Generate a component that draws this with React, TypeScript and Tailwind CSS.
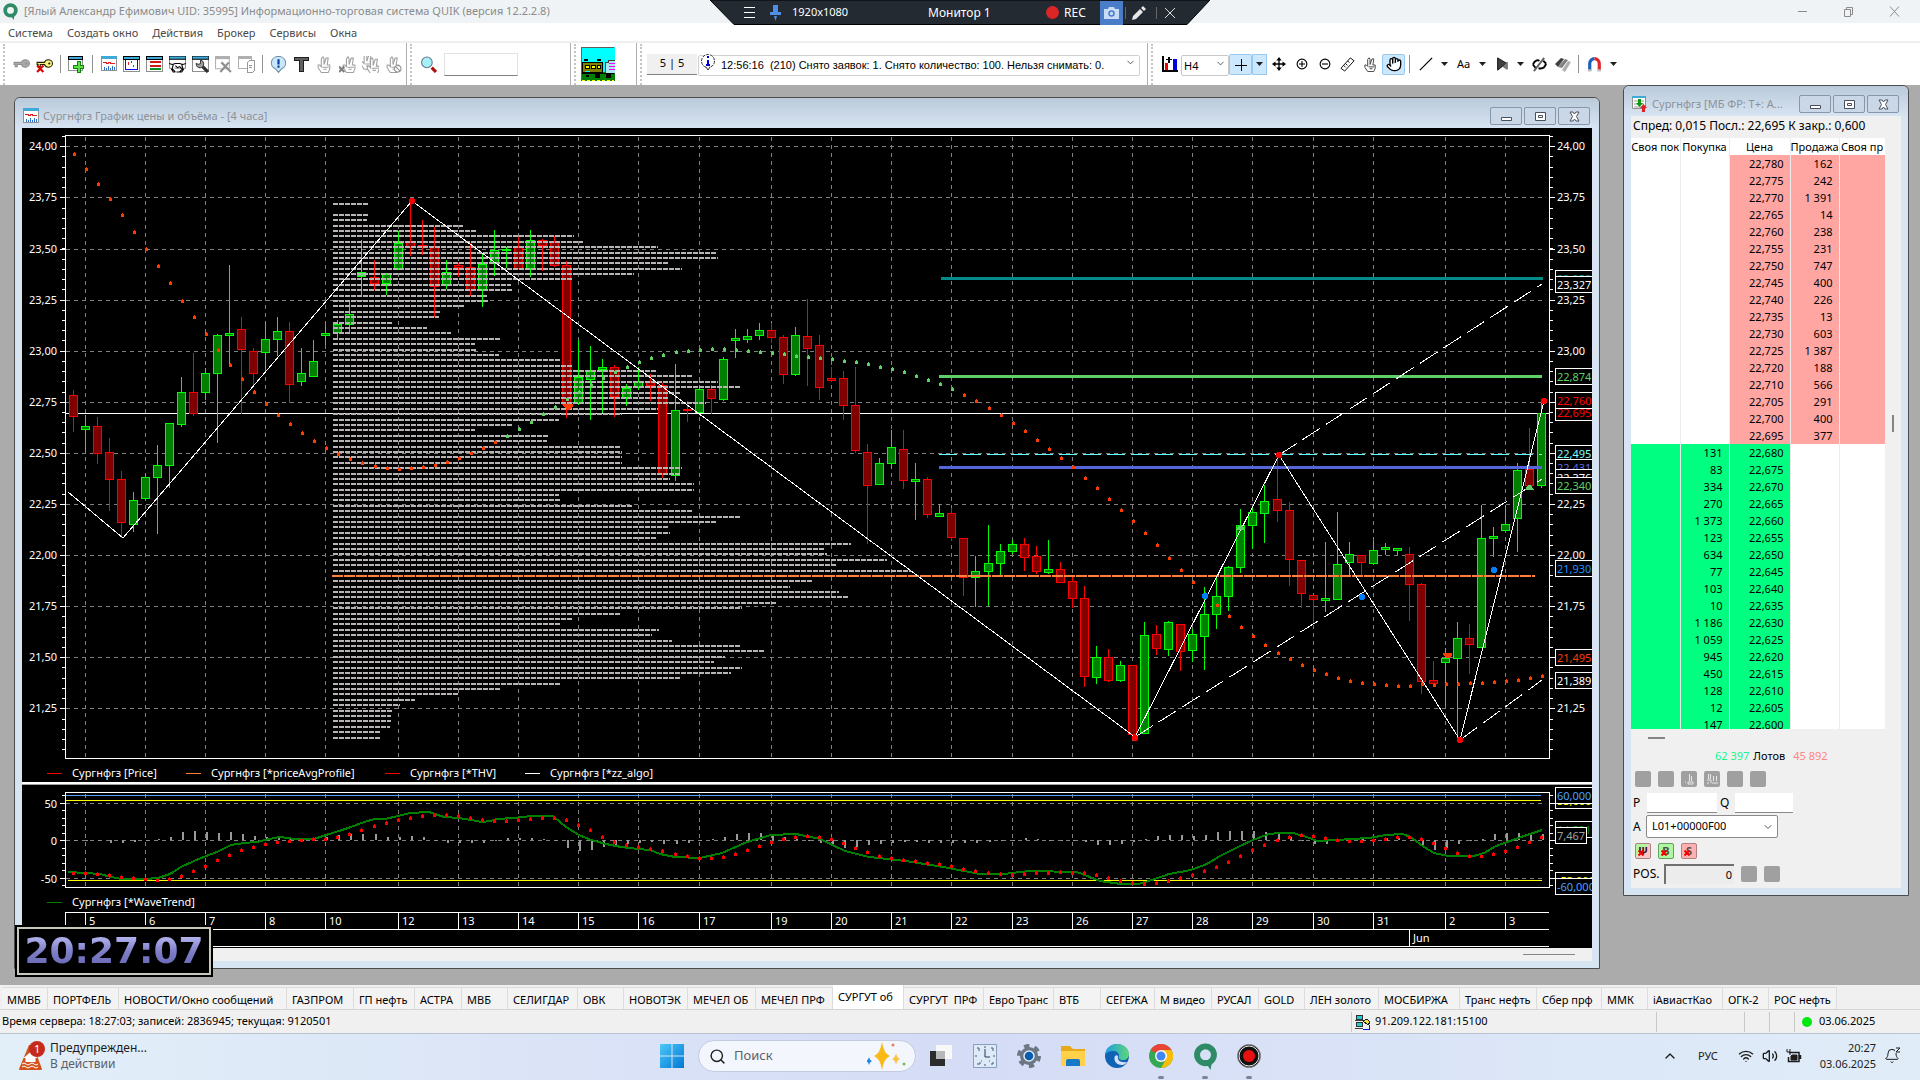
import type { ReactNode } from "react";
import { Bell, ChevronDown, ChevronUp, Hand, Search, Volume2, Wifi } from "lucide-react";

type Candle = [string, number, number, number, number];

interface IQuote {
  price: string;
  qty: string;
}

interface ITab {
  title: string;
  width: string;
}

/* ---------- chart data ---------- */

// color, high, body top, body bottom, low
const candles: Candle[] = [
  ["r", 390, 395, 417, 432], ["g", 415, 426, 430, 452], ["r", 417, 426, 454, 464],
  ["r", 438, 452, 480, 511], ["r", 471, 479, 523, 538], ["g", 492, 500, 525, 532],
  ["g", 474, 477, 499, 500], ["g", 445, 465, 478, 534], ["g", 423, 423, 466, 488],
  ["g", 377, 392, 425, 427], ["r", 353, 392, 414, 416], ["g", 368, 373, 393, 400],
  ["g", 334, 335, 374, 443], ["g", 265, 333, 336, 364], ["r", 317, 329, 350, 414],
  ["r", 348, 351, 374, 385], ["g", 322, 339, 353, 369], ["g", 317, 331, 340, 356],
  ["r", 322, 331, 385, 403], ["g", 348, 373, 382, 386], ["g", 340, 361, 377, 377],
  ["g", 324, 333, 336, 345], ["g", 320, 324, 333, 338], ["g", 302, 314, 325, 334],
  ["l", 240, 272, 277, 295], ["r", 260, 277, 284, 290], ["g", 273, 274, 284, 295],
  ["g", 231, 243, 269, 270], ["r", 201, 242, 248, 256], ["r", 220, 245, 247, 255],
  ["r", 227, 246, 287, 317], ["g", 260, 272, 285, 289], ["r", 263, 265, 268, 277],
  ["r", 243, 267, 291, 296], ["g", 253, 264, 290, 307], ["g", 230, 250, 263, 276],
  ["g", 247, 249, 251, 268], ["r", 237, 247, 269, 269], ["g", 230, 240, 269, 277],
  ["r", 239, 240, 246, 271], ["r", 236, 242, 266, 267], ["r", 261, 265, 405, 418],
  ["g", 340, 377, 404, 405], ["g", 346, 371, 380, 420], ["g", 359, 367, 370, 413],
  ["r", 365, 367, 397, 417], ["g", 384, 388, 398, 406], ["g", 367, 381, 388, 390],
  ["r", 374, 382, 386, 401], ["r", 383, 385, 474, 478], ["g", 364, 410, 476, 481],
  ["r", 401, 409, 410, 422], ["g", 388, 389, 413, 413], ["r", 385, 389, 399, 414],
  ["g", 357, 359, 400, 401], ["g", 329, 338, 341, 358], ["g", 329, 336, 340, 343],
  ["g", 323, 330, 336, 340], ["r", 323, 330, 338, 343], ["r", 335, 337, 375, 384],
  ["g", 327, 335, 375, 376], ["r", 299, 336, 349, 386], ["r", 335, 345, 388, 400],
  ["r", 367, 378, 381, 382], ["r", 371, 378, 406, 420], ["r", 367, 405, 451, 453],
  ["r", 444, 452, 486, 544], ["g", 458, 463, 485, 485], ["g", 430, 447, 464, 469],
  ["r", 430, 449, 481, 489], ["g", 463, 479, 482, 520], ["r", 477, 479, 515, 518],
  ["g", 504, 513, 517, 517], ["r", 508, 513, 538, 541], ["r", 538, 538, 578, 596],
  ["g", 556, 571, 578, 607], ["g", 525, 563, 572, 606], ["g", 544, 551, 564, 576],
  ["g", 540, 544, 552, 554], ["r", 538, 544, 558, 571], ["r", 546, 556, 572, 574],
  ["g", 540, 569, 573, 574], ["r", 562, 569, 583, 583], ["r", 577, 581, 599, 608],
  ["r", 586, 598, 677, 687], ["g", 646, 657, 678, 684], ["r", 649, 657, 681, 682],
  ["g", 661, 665, 681, 682], ["r", 665, 665, 735, 737], ["g", 622, 635, 734, 734],
  ["r", 625, 634, 649, 655], ["g", 621, 622, 650, 656], ["r", 624, 624, 652, 671],
  ["g", 629, 634, 651, 662], ["g", 587, 614, 637, 670], ["g", 578, 596, 615, 629],
  ["g", 566, 567, 597, 611], ["g", 509, 525, 568, 573], ["g", 508, 512, 526, 549],
  ["g", 485, 501, 514, 543], ["r", 455, 499, 511, 522], ["r", 502, 510, 560, 586],
  ["r", 560, 560, 594, 608], ["r", 595, 595, 600, 624], ["g", 542, 598, 601, 612],
  ["g", 512, 564, 600, 600], ["g", 542, 554, 563, 576], ["r", 555, 555, 563, 576],
  ["g", 541, 550, 564, 564], ["g", 543, 547, 550, 555], ["g", 548, 548, 551, 555],
  ["r", 547, 554, 585, 621], ["r", 583, 584, 682, 694], ["r", 661, 680, 684, 684],
  ["g", 648, 658, 663, 706], ["g", 622, 638, 659, 740], ["r", 624, 638, 645, 674],
  ["g", 505, 538, 648, 648], ["g", 527, 536, 539, 557], ["g", 505, 524, 531, 531],
  ["g", 463, 470, 519, 552], ["r", 428, 469, 486, 486], ["g", 401, 413, 486, 488],
];

// right edge of every volume row, 0 means an empty row
const profile: number[] = [
  369, 0, 369, 367, 463, 477, 574, 583, 658, 716, 718, 668, 682, 634, 572, 511, 513, 487, 489, 465,
  441, 439, 393, 427, 451, 501, 475, 477, 499, 561, 572, 656, 692, 718, 740, 680, 668, 706, 658, 622,
  559, 513, 475, 549, 547, 620, 622, 622, 622, 682, 680, 670, 694, 694, 559, 561, 632, 692, 740, 716,
  668, 670, 656, 851, 825, 827, 887, 837, 911, 0, 812, 790, 839, 849, 776, 742, 620, 572, 560, 659,
  652, 672, 740, 765, 725, 714, 742, 731, 680, 560, 500, 458, 415, 400, 393, 391, 391, 390, 380, 380,
];

const thv: number[] = [
  153, 168, 183, 198, 214, 231, 248, 265, 282, 300, 316, 333, 349, 364, 378, 391, 403, 414, 423, 432,
  440, 447, 453, 458, 462, 465, 467, 468, 467, 466, 464, 461, 457, 452, 447, 441, 435, 428, 421, 413,
  406, 398, 391, 384, 377, 371, 366, 361, 357, 354, 351, 350, 349, 348, 348, 349, 350, 351, 352, 353,
  355, 356, 357, 358, 360, 361, 363, 366, 368, 371, 375, 379, 383, 388, 394, 400, 407, 414, 422, 430,
  439, 448, 457, 466, 477, 487, 498, 509, 520, 532, 544, 557, 569, 581, 593, 604, 615, 626, 635, 644,
  652, 658, 664, 669, 673, 677, 680, 682, 683, 684, 685, 685, 683, 684, 683, 683, 682, 682, 681, 680,
  679, 677, 675,
];

const wave: [number, number][] = [
  [68, 872], [86, 873], [100, 874], [111, 877], [122, 879], [145, 879], [158, 878], [170, 874],
  [181, 867], [194, 861], [206, 856], [217, 852], [231, 845], [244, 843], [257, 842], [269, 839],
  [280, 837], [295, 839], [314, 839], [326, 835], [339, 831], [351, 827], [364, 822], [375, 819],
  [385, 819], [398, 816], [410, 813], [429, 812], [444, 817], [459, 818], [471, 820], [482, 822],
  [490, 821], [497, 819], [513, 818], [532, 816], [553, 816], [566, 827], [579, 835], [591, 840],
  [606, 844], [621, 847], [638, 849], [650, 850], [660, 854], [675, 857], [700, 858], [722, 853],
  [747, 842], [771, 835], [796, 834], [820, 839], [845, 851], [869, 857], [906, 861], [943, 867],
  [980, 874], [1004, 874], [1029, 871], [1077, 872], [1100, 881], [1121, 884], [1138, 884],
  [1152, 880], [1169, 874], [1191, 870], [1207, 864], [1220, 856], [1238, 847], [1253, 840],
  [1269, 834], [1279, 833], [1293, 833], [1307, 837], [1317, 841], [1338, 840], [1351, 839],
  [1369, 838], [1386, 835], [1403, 834], [1412, 838], [1424, 847], [1434, 853], [1448, 856],
  [1474, 856], [1484, 853], [1496, 846], [1510, 841], [1524, 836], [1542, 830],
];

const days: [number, string][] = [
  [1, "5"], [6, "6"], [11, "7"], [16, "8"], [21, "10"], [27, "12"], [32, "13"], [37, "14"],
  [42, "15"], [47, "16"], [52, "17"], [58, "19"], [63, "20"], [68, "21"], [73, "22"], [78, "23"],
  [83, "26"], [88, "27"], [93, "28"], [98, "29"], [103, "30"], [108, "31"], [114, "2"], [119, "3"],
];

const prices = ["24,00", "23,75", "23,50", "23,25", "23,00", "22,75", "22,50", "22,25", "22,00", "21,75", "21,50", "21,25"];

// prices that a tag covers on the right axis
const covered = ["22,75", "22,50", "21,50"];

const priceTags: [string, number, string][] = [
  ["23,353", 279, "#008b8b"],
  ["23,327", 285, "#ffffff"],
  ["22,874", 377, "#5fd068"],
  ["22,695", 413, "#ff0000"],
  ["22,760", 401, "#ff0000"],
  ["22,495", 454, "#7fffff"],
  ["22,431", 468, "#5b6ee0"],
  ["22,376", 478, "#ffffff"],
  ["22,340", 486, "#5fd068"],
  ["21,930", 569, "#1e90ff"],
  ["21,495", 658, "#ff3c00"],
  ["21,389", 681, "#ffffff"],
];

const legend: [number, string, string][] = [
  [47, "Сургнфгз [Price]", "#ff0000"],
  [186, "Сургнфгз [*priceAvgProfile]", "#ff7f3f"],
  [385, "Сургнфгз [*THV]", "#ff0000"],
  [525, "Сургнфгз [*zz_algo]", "#ffffff"],
];

const candleX = (i: number) => Math.round(72.5 + 12.04 * i);
const priceY = (i: number) => Math.round(146.3 + 51.1 * i);

const waveAt = (x: number) => {
  const next = wave.findIndex((p) => p[0] >= x);
  if (next < 0) return wave[wave.length - 1][1];
  if (next === 0) return wave[0][1];
  const [x1, y1] = wave[next - 1];
  const [x2, y2] = wave[next];
  return y1 + ((y2 - y1) * (x - x1)) / (x2 - x1);
};

// average of the last four wave values
const signalAt = (i: number) => {
  let sum = 0;
  for (let k = 0; k < 4; k++) sum += waveAt(candleX(i - k));
  return sum / 4;
};

/* ---------- chart ---------- */

const PriceTag = ({ text, y, color, width = 40 }: { text: string; y: number; color: string; width?: number }) => (
  <g>
    <rect x={1555.5} y={y - 8.5} width={width} height={16} fill="#000" stroke="#fff" />
    <text x={1557} y={y + 4} fill={color}>
      {text}
    </text>
  </g>
);

const Grid = ({ top, bottom }: { top: number; bottom: number }) => (
  <g stroke="#808080" strokeDasharray="4 4">
    {days.map(([i]) => (
      <line key={i} x1={candleX(i) + 0.5} x2={candleX(i) + 0.5} y1={top} y2={bottom} />
    ))}
  </g>
);

const PricePanel = () => (
  <g>
    <Grid top={137} bottom={758} />
    {prices.map((p, i) => (
      <g key={p}>
        <line x1={66} x2={1546} y1={priceY(i) + 0.5} y2={priceY(i) + 0.5} stroke="#808080" strokeDasharray="4 4" />
        <path d={`M60 ${priceY(i) + 0.5}h5M1550 ${priceY(i) + 0.5}h5`} stroke="#fff" />
        <text x={57} y={priceY(i) + 4} textAnchor="end" fill="#fff">
          {p}
        </text>
        {!covered.includes(p) && (
          <text x={1557} y={priceY(i) + 4} fill="#fff">
            {p}
          </text>
        )}
      </g>
    ))}
    {Array.from({ length: 61 }, (_, i) => (
      <path key={i} d={`M62 ${Math.round(136 + i * 10.22) + 0.5}h3M1550 ${Math.round(136 + i * 10.22) + 0.5}h3`} stroke="#fff" />
    ))}
    <rect x={65.5} y={135.5} width={1484} height={623} fill="none" stroke="#fff" />
    <line x1={66} x2={1549} y1={413.5} y2={413.5} stroke="#fff" />

    {candles.map(([color, high, top, bottom, low], i) => {
      const x = candleX(i);
      const line = color === "r" ? "#ff0000" : "#00ff00";
      const fill = color === "r" ? "#800000" : color === "g" ? "#008000" : "#5fd068";
      return (
        <g key={i} stroke={line}>
          <line x1={x + 0.5} x2={x + 0.5} y1={high} y2={low} />
          <rect x={x - 3.5} y={top + 0.5} width={8} height={Math.max(bottom - top - 1, 0.5)} fill={fill} />
        </g>
      );
    })}

    {profile.map((right, k) =>
      right ? (
        <line
          key={k}
          x1={333}
          x2={right}
          y1={Math.round(204 + k * 5.39)}
          y2={Math.round(204 + k * 5.39)}
          stroke="#b8b4b4"
          strokeWidth={2}
          strokeDasharray="5 1 5 1"
        />
      ) : null
    )}
    <line x1={332} x2={1535} y1={576} y2={576} stroke="#ff7f3f" strokeWidth={2} strokeDasharray="11 1" />

    {/* levels */}
    <rect x={941} y={277} width={602} height={3} fill="#008b8b" />
    <rect x={939} y={375} width={603} height={3} fill="#5fd068" />
    <rect x={939} y={466} width={603} height={3} fill="#5566d8" />
    <line x1={939} x2={1542} y1={454.5} y2={454.5} stroke="#5fffff" strokeDasharray="18 6" />

    {thv.map((y, i) => (
      <path
        key={i}
        d={`M${candleX(i)} ${y}h3v3h-3zM${candleX(i) + 1} ${y - 1}h1v1h-1z`}
        fill={i > 35 && i < 74 ? "#5fd068" : "#ff3c00"}
      />
    ))}

    {/* zigzag */}
    <polyline points="68,492 123,538 412,201 1135,737 1279,455 1460,740 1544,401" fill="none" stroke="#fff" />
    <path d="M1135 737L1542 479M1279 455L1542 284M1460 740L1542 680" stroke="#fff" strokeDasharray="21 7" />
    <g fill="#ff0000">
      <circle cx={412} cy={201} r={3} />
      <circle cx={1135} cy={738} r={3} />
      <circle cx={1279} cy={455} r={3} />
      <circle cx={1460} cy={740} r={3} />
      <circle cx={1544} cy={401} r={3} />
    </g>
    <g fill="#0080ff">
      <circle cx={1205} cy={596} r={3} />
      <circle cx={1362} cy={597} r={3} />
      <circle cx={1494} cy={570} r={3} />
    </g>
    <path d="M563 404h10v2l-4 4h-2l-4-4zM1443 653h9v2l-3 3h-3l-3-3z" fill="#ff3c00" />
    <path d="M1236 530h9l-2-4h-5zM1525 490h9l-3-5h-3z" fill="#5fd068" />

    {priceTags.map(([text, y, color]) => (
      <PriceTag key={text} text={text} y={y} color={color} />
    ))}

    {legend.map(([x, text, color]) => (
      <g key={text}>
        <line x1={x} x2={x + 15} y1={773.5} y2={773.5} stroke={color} />
        <text x={x + 25} y={777} fill="#fff">
          {text}
        </text>
      </g>
    ))}
  </g>
);

const WavePanel = () => (
  <g>
    <Grid top={794} bottom={887} />
    {[
      ["50", 803],
      ["0", 840],
      ["-50", 878],
    ].map(([label, y]) => (
      <g key={label}>
        <line x1={66} x2={1546} y1={Number(y) + 0.5} y2={Number(y) + 0.5} stroke="#808080" strokeDasharray="4 4" />
        <path d={`M60 ${Number(y) + 0.5}h5M1550 ${Number(y) + 0.5}h5`} stroke="#fff" />
        <text x={57} y={Number(y) + 5} textAnchor="end" fill="#fff">
          {label}
        </text>
      </g>
    ))}
    {Array.from({ length: 13 }, (_, i) => (
      <path key={i} d={`M62 ${Math.round(795 + i * 7.5) + 0.5}h3M1550 ${Math.round(795 + i * 7.5) + 0.5}h3`} stroke="#fff" />
    ))}
    <rect x={65.5} y={792.5} width={1484} height={95} fill="none" stroke="#fff" />
    <line x1={66} x2={1541} y1={795.5} y2={795.5} stroke="#4da0ff" />
    <path d="M66 800.5H1541M68 880.5H1542" stroke="#ffff00" />

    {candles.map((_, i) => {
      const diff = signalAt(i) - waveAt(candleX(i));
      const y = diff > 0 ? 840 - diff : 840;
      return <rect key={i} x={candleX(i) + 1} y={y} width={2} height={Math.max(Math.abs(diff), 1)} fill="#999" />;
    })}
    <polyline points={wave.map((p) => p.join(",")).join(" ")} fill="none" stroke="#008000" strokeWidth={2} />
    {candles.map((_, i) => {
      const y = Math.round(signalAt(i));
      return <path key={i} d={`M${candleX(i) - 1} ${y}h3v3h-3zM${candleX(i)} ${y - 1}h1v1h-1z`} fill="#ff0000" />;
    })}

    <PriceTag text="53,000" y={801} color="#ffff00" />
    <PriceTag text="60,000" y={796} color="#4da0ff" />
    <PriceTag text="14,531" y={830} color="#008000" />
    <PriceTag text="7,467" y={836} color="#a0a0a0" width={31} />
    <PriceTag text="-53,000" y={881} color="#ffff00" width={48} />
    <PriceTag text="-60,000" y={887} color="#4da0ff" width={48} />

    <line x1={47} x2={62} y1={902.5} y2={902.5} stroke="#008000" />
    <text x={72} y={906} fill="#fff">
      Сургнфгз [*WaveTrend]
    </text>
  </g>
);

const TimeAxis = () => (
  <g>
    <path d="M1549 912.5H65.5V929.5H1549M65 946.5H1549M1409.5 929V946" fill="none" stroke="#fff" />
    {days.map(([i, label]) => (
      <g key={i}>
        <line x1={candleX(i) + 0.5} x2={candleX(i) + 0.5} y1={913} y2={929} stroke="#fff" />
        <text x={candleX(i) + 4} y={925} fill="#fff">
          {label}
        </text>
      </g>
    ))}
    <text x={1413} y={942} fill="#fff">
      Jun
    </text>
  </g>
);

const Chart = () => (
  <svg viewBox="22 128 1570 820" className="block w-full bg-black text-[11px]" shapeRendering="crispEdges">
    <PricePanel />
    <rect x={22} y={782} width={1570} height={2} fill="#fff" />
    <rect x={22} y={784} width={1570} height={1} fill="#a0a0a0" />
    <WavePanel />
    <TimeAxis />
  </svg>
);

/* ---------- window chrome ---------- */

const ChartIcon = () => (
  <svg width="16" height="16" viewBox="0 0 16 16" shapeRendering="crispEdges" aria-hidden="true">
    <path d="M.5 1.5h15v13H.5z" fill="#fff" stroke="#909090" />
    <path d="M0 0h16v3H0z" fill="#3fa9d8" />
    <path d="M2 6h3v1h2v-1h2v1h5" fill="none" stroke="#e02020" />
    <path d="M3 14v-3M5 14v-2M7 14v-4M9 14v-2M11 14v-4M13 14v-3" stroke="#2a70c8" />
  </svg>
);

const BookIcon = () => (
  <svg width="16" height="16" viewBox="0 0 16 16" aria-hidden="true">
    <path d="M.5.5h13v12H.5z" fill="#fff" stroke="#909090" />
    <path d="M0 0h14v2H0z" fill="#3fa9d8" />
    <path d="M2 5h10M2 8h10M2 11h10" stroke="#999" />
    <path d="M6 3h3v4h2l-3.500 4L4 7h2z" fill="#0a9a10" />
    <path d="M10 16h3v-4h2l-3.500-4L8 12h2z" fill="#e02020" />
  </svg>
);

const WindowButton = ({ kind }: { kind: "min" | "max" | "close" }) => (
  <button
    aria-label={kind}
    className="flex h-[18px] w-8 items-center justify-center rounded-xs border border-[#8796ad] bg-[#c9d7e7]"
  >
    <svg width="13" height="11" viewBox="0 0 13 11" fill="#fff" stroke="#484f5e" aria-hidden="true">
      {kind === "min" && <path d="M1.500 6.500h10v3h-10z" />}
      {kind === "max" && <path d="M1.500 1.500h10v8h-10zM4.500 4.500h4v2h-4z" />}
      {kind === "close" && <path d="M2 1h3l1.500 2L8 1h3L8.500 5.500 11 10H8L6.500 8 5 10H2l2.500-4.500z" />}
    </svg>
  </button>
);

const MdiWindow = ({ title, icon, children, className }: { title: string; icon: ReactNode; children: ReactNode; className: string }) => (
  <section className={`rounded-t-md border border-[#4c4c4c] bg-[#d7e4f2] ${className}`}>
    <header className="flex h-[30px] items-center gap-1 rounded-t-md bg-linear-to-b from-[#bacada] to-[#d7e4f2] pt-1.5 pr-[9px] pl-2">
      {icon}
      <h2 className="flex-1 text-[11px] whitespace-nowrap text-[#8c9299]">{title}</h2>
      <div className="flex gap-0.5">
        <WindowButton kind="min" />
        <WindowButton kind="max" />
        <WindowButton kind="close" />
      </div>
    </header>
    <div className="mx-[7px] mb-[7px] bg-[#f0f0f0]">{children}</div>
  </section>
);

/* ---------- order book ---------- */

const asks: IQuote[] = [
  { price: "22,780", qty: "162" },
  { price: "22,775", qty: "242" },
  { price: "22,770", qty: "1 391" },
  { price: "22,765", qty: "14" },
  { price: "22,760", qty: "238" },
  { price: "22,755", qty: "231" },
  { price: "22,750", qty: "747" },
  { price: "22,745", qty: "400" },
  { price: "22,740", qty: "226" },
  { price: "22,735", qty: "13" },
  { price: "22,730", qty: "603" },
  { price: "22,725", qty: "1 387" },
  { price: "22,720", qty: "188" },
  { price: "22,710", qty: "566" },
  { price: "22,705", qty: "291" },
  { price: "22,700", qty: "400" },
  { price: "22,695", qty: "377" },
];

const bids: IQuote[] = [
  { price: "22,680", qty: "131" },
  { price: "22,675", qty: "83" },
  { price: "22,670", qty: "334" },
  { price: "22,665", qty: "270" },
  { price: "22,660", qty: "1 373" },
  { price: "22,655", qty: "123" },
  { price: "22,650", qty: "634" },
  { price: "22,645", qty: "77" },
  { price: "22,640", qty: "103" },
  { price: "22,635", qty: "10" },
  { price: "22,630", qty: "1 186" },
  { price: "22,625", qty: "1 059" },
  { price: "22,620", qty: "945" },
  { price: "22,615", qty: "450" },
  { price: "22,610", qty: "128" },
  { price: "22,605", qty: "12" },
  { price: "22,600", qty: "147" },
];

const GrayButton = ({ label, children }: { label: string; children?: ReactNode }) => (
  <button aria-label={label} className="flex size-4 items-center justify-center rounded-xs bg-[#a0a0a0] text-white">
    {children}
  </button>
);

const OrderBook = () => (
  <div className="text-[11px] text-black">
    <p className="h-[22px] pl-0.5 text-[12px] leading-5 whitespace-nowrap">Спред: 0,015 Посл.: 22,695 К закр.: 0,600</p>
    <div className="flex">
      <div className="h-[591px] w-[254px] overflow-hidden bg-white">
        <table className="w-full table-fixed border-collapse">
          <colgroup>
            <col className="w-[49px]" />
            <col className="w-[49px]" />
            <col className="w-[61px]" />
            <col className="w-[49px]" />
            <col className="w-[46px]" />
          </colgroup>
          <thead>
            <tr className="h-[17px]">
              {["Своя пок", "Покупка", "Цена", "Продажа", "Своя пр"].map((name) => (
                <th key={name} className="border-r border-[#ececec] p-0 text-center font-normal leading-4 whitespace-nowrap">
                  {name}
                </th>
              ))}
            </tr>
          </thead>
          <tbody className="text-right leading-4">
            {asks.map((row) => (
              <tr key={row.price} className="h-[17px]">
                <td className="border-r border-[#ececec] p-0" />
                <td className="border-r border-[#ececec] p-0" />
                <td className="border-r border-[#ececec] bg-[#ffa6a3] py-0 pr-1.5 pl-0">{row.price}</td>
                <td className="border-r border-[#ececec] bg-[#ffa6a3] py-0 pr-1.5 pl-0">{row.qty}</td>
                <td className="border-r border-[#ececec] bg-[#ffa6a3] p-0" />
              </tr>
            ))}
            {bids.map((row) => (
              <tr key={row.price} className="h-[17px]">
                <td className="border-r border-[#ececec] bg-[#00ff80] p-0" />
                <td className="border-r border-[#ececec] bg-[#00ff80] py-0 pr-1.5 pl-0">{row.qty}</td>
                <td className="border-r border-[#ececec] bg-[#00ff80] py-0 pr-1.5 pl-0">{row.price}</td>
                <td className="border-r border-[#ececec] p-0" />
                <td className="border-r border-[#ececec] p-0" />
              </tr>
            ))}
          </tbody>
        </table>
      </div>
      <div className="flex flex-1 justify-center pt-[277px]">
        <div className="h-[17px] w-0.5 bg-[#858585]" />
      </div>
    </div>
    <div className="h-[17px] pt-2 pl-[17px]">
      <div className="h-0.5 w-[17px] bg-[#858585]" />
    </div>
    <p className="flex h-[25px] items-start gap-1 pt-0.5 pl-[84px] text-[11px]">
      <span className="text-[#17f58a]">62 397</span>
      <span>Лотов</span>
      <span className="pl-1 text-[#ff8583]">45 892</span>
    </p>
    <div className="flex gap-[7px] px-1">
      <GrayButton label="Заявка" />
      <GrayButton label="Стоп-заявка" />
      <GrayButton label="Снять">
        <svg width="12" height="12" viewBox="0 0 12 12" fill="none" stroke="#e8e8e8" aria-hidden="true">
          <path d="M6.500 1v7M8.500 3v5M5 9h5v2H5zM2 9h1" />
        </svg>
      </GrayButton>
      <GrayButton label="Снять все">
        <svg width="14" height="12" viewBox="0 0 14 12" fill="none" stroke="#e8e8e8" aria-hidden="true">
          <path d="M3.500 1v5M5.500 1v5M8.500 3v5M11.500 3v5M2 7h4v3M7 10h6M2 10h2" />
        </svg>
      </GrayButton>
      <GrayButton label="Покупка" />
      <GrayButton label="Продажа" />
    </div>
    <div className="flex h-[27px] items-center pt-1 pl-0.5 text-[12px]">
      <label htmlFor="order-price" className="w-[14px]">P</label>
      <input id="order-price" className="h-5 w-[70px] border-b border-[#8a8a8a] bg-white px-1" />
      <label htmlFor="order-qty" className="w-[18px] pl-[3px]">Q</label>
      <input id="order-qty" className="h-5 w-[58px] border-b border-[#8a8a8a] bg-white px-1" />
    </div>
    <div className="flex h-[25px] items-center pl-0.5 text-[12px]">
      <label htmlFor="account" className="w-[13px]">A</label>
      <span className="relative">
        <select id="account" className="h-[23px] w-[132px] appearance-none rounded-xs border border-[#8a8a8a] bg-white pl-[5px] text-[11px]">
          <option>L01+00000F00</option>
        </select>
        <ChevronDown size={12} className="pointer-events-none absolute top-1.5 right-1 text-[#555]" />
      </span>
    </div>
    <div className="flex gap-[7px] px-1 pt-1 text-[11px] font-bold leading-3">
      {[
        ["Ψ", "border-[#b08080] bg-linear-to-br from-[#b0f8a0] from-40% to-[#f8c8c8] to-50% text-[#401010]"],
        ["B", "border-[#60a060] bg-[#b0f8a0] text-[#505050]"],
        ["S", "border-[#b08080] bg-[#ffb0b0] text-[#505050]"],
      ].map(([letter, look]) => (
        <button key={letter} aria-label={letter} className={`relative size-4 rounded-xs border ${look}`}>
          {letter}
          <svg width="6" height="6" viewBox="0 0 6 6" stroke="#f00000" strokeWidth="2" className="absolute bottom-0.5 left-0.5" aria-hidden="true">
            <path d="M.5.5l5 5M5.500.5l-5 5" />
          </svg>
        </button>
      ))}
    </div>
    <div className="flex h-[29px] items-center gap-[7px] pl-0.5 text-[12px]">
      <label htmlFor="position" className="w-6">POS.</label>
      <input id="position" readOnly value="0" className="h-5 w-[70px] border-t-2 border-l-2 border-[#707070] bg-[#ececec] pr-0.5 text-right text-[11px]" />
      <GrayButton label="Закрыть позицию" />
      <GrayButton label="Перевернуть позицию" />
    </div>
  </div>
);

/* ---------- toolbar ---------- */

const Ico = ({ children, size = 17, crisp = true }: { children: ReactNode; size?: number; crisp?: boolean }) => (
  <svg
    width={size}
    height={size}
    viewBox="0 0 16 16"
    fill="none"
    stroke="#000"
    shapeRendering={crisp ? "crispEdges" : "auto"}
    aria-hidden="true"
  >
    {children}
  </svg>
);

const ToolButton = ({ label, children, active }: { label: string; children: ReactNode; active?: boolean }) => (
  <button
    aria-label={label}
    className={`flex h-[21px] w-[23px] items-center justify-center text-[12px] ${active ? "rounded-xs border border-[#99c9ef] bg-[#cce8ff]" : ""}`}
  >
    {children}
  </button>
);

const Caret = ({ active }: { active?: boolean }) => (
  <button aria-label="Список" className={`flex h-[21px] w-[15px] items-center justify-center ${active ? "border border-[#99c9ef] bg-[#cce8ff]" : ""}`}>
    <svg width="7" height="4" viewBox="0 0 7 4" fill="#202020" aria-hidden="true">
      <path d="M0 0h7L3.500 4z" />
    </svg>
  </button>
);

const Sep = () => <span className="mx-1 h-[18px] w-px bg-[#909090]" />;

const Grip = () => <span className="mr-[5px] ml-[3px] h-[41px] border-l-2 border-dotted border-[#c4c4c4]" />;

// open palm with two raised fingers
const HandShape = ({ color }: { color: string }) => (
  <>
    <path
      d="M5 15.500L2 11V8.500h1.500L5 10V2.500L6.500.8 7.500 2.500V8L9.500 2h2L10.500 8.500H13v3.500l-1.500 3.500z"
      stroke={color}
      fill="#fff"
    />
    <path d="M6 10.500h6M7 12.500h3" stroke={color} />
  </>
);

const FrameShape = () => (
  <>
    <path d="M.5 1.500h15v13H.5z" fill="#fff" stroke="#909090" />
    <path d="M0 0h16v3H0z" fill="#3fa9d8" />
  </>
);

const Key = ({ color, fill }: { color: string; fill: string }) => (
  <>
    <path d="M8 6H1v2h1v2h2V8h4c.5 1.500 1.500 2.500 3.500 2.500S15.500 9 15.500 7s-2-3.500-4-3.500S8.500 4.500 8 6z" stroke={color} fill={fill} />
    <circle cx="12.500" cy="7" r="1" fill={color} stroke="none" />
  </>
);

const Toolbar = () => (
  <div className="flex h-[44px] items-stretch border-t-2 border-[#efefef] bg-white">
    <div className="flex w-[407px] items-center border-r border-[#b0b0b0]">
      <Grip />
      <ToolButton label="Соединение">
        <Ico crisp={false}><Key color="#909090" fill="#a8a8a8" /></Ico>
      </ToolButton>
      <ToolButton label="Разорвать соединение">
        <Ico crisp={false}>
          <Key color="#202000" fill="#f8f080" />
          <path d="M1 9l6 6M7 9l-6 6" stroke="#e00000" strokeWidth="2" />
        </Ico>
      </ToolButton>
      <Sep />
      <ToolButton label="Создать окно">
        <Ico>
          <path d="M.5 1.500h13v12H.5z" fill="#fff" stroke="#909090" />
          <path d="M0 0h14v3H0z" fill="#3fa9d8" />
          <path d="M8.500 5.500h3v3h3v3h-3v4h-3v-4h-3v-3h3z" fill="#60e048" stroke="#108010" />
        </Ico>
      </ToolButton>
      <Sep />
      <ToolButton label="График"><ChartIcon /></ToolButton>
      <ToolButton label="Индикаторы">
        <Ico>
          <FrameShape />
          <path d="M2.500 4v8.500h11V4" stroke="#1010f0" />
          <path d="M5 6v2M8 5v2M10 8v2" stroke="#e02020" />
        </Ico>
      </ToolButton>
      <ToolButton label="Котировки">
        <Ico>
          <FrameShape />
          <path d="M4 6h10M4 9h10" stroke="#d01818" strokeWidth="2" />
          <path d="M4 12h10" stroke="#109020" strokeWidth="2" />
        </Ico>
      </ToolButton>
      <ToolButton label="Сделки">
        <Ico crisp={false}>
          <path d="M.5 1.500h15v10H.5z" fill="#fff" stroke="#909090" />
          <path d="M0 0h16v3H0z" fill="#3fa9d8" />
          <path d="M0 7l3 1 3-1h4l3 1 3-1M2 12l2 3h2M14 12l-2 3H7M4 8l-1 4 3 3M12 8l1 4-3 3M6 9l2 2 2-1 2 2" fill="#fff" />
        </Ico>
      </ToolButton>
      <ToolButton label="Настройка">
        <Ico crisp={false}>
          <FrameShape />
          <path d="M8 8l7 7" strokeWidth="3" stroke="#303030" />
          <path d="M4 7a3.500 3.500 0 1 0 4-3v3L6 8z" fill="#a0a0a0" stroke="#404040" />
        </Ico>
      </ToolButton>
      <ToolButton label="Удалить">
        <Ico crisp={false}>
          <path d="M.5 1h13v11H.5z" stroke="#b0b0b0" />
          <path d="M0 1.500h14" stroke="#b0b0b0" strokeWidth="3" />
          <path d="M6 6l9 9M13 6l-8 9" stroke="#909090" strokeWidth="2" />
        </Ico>
      </ToolButton>
      <ToolButton label="Копировать">
        <Ico>
          <path d="M.5 1h12v11H.5z" stroke="#b0b0b0" />
          <path d="M0 1.500h13" stroke="#b0b0b0" strokeWidth="3" />
          <path d="M8.500 6.500l2-2h5v9l-2 2h-5zM10 9h3M10 11h3" stroke="#989898" fill="#fff" />
        </Ico>
      </ToolButton>
      <Sep />
      <ToolButton label="Сообщение">
        <Ico crisp={false}>
          <path d="M8 .5a6 6 0 0 1 3 11.500L8 15.500 5 12A6 6 0 0 1 8 .5z" fill="#c8e8fa" stroke="#7090a8" />
          <path d="M8 3v5M8 9v2" stroke="#0838a0" strokeWidth="2" />
        </Ico>
      </ToolButton>
      <ToolButton label="Текст">
        <Ico><path d="M1.500 1.500h13v3h-5v10h-3v-10h-5z" fill="#606060" stroke="#202020" /></Ico>
      </ToolButton>
      <ToolButton label="Заявка"><Ico crisp={false}><HandShape color="#a0a0a0" /></Ico></ToolButton>
      <ToolButton label="Снять заявку">
        <Ico crisp={false}>
          <g transform="translate(2 0)"><HandShape color="#a0a0a0" /></g>
          <path d="M0 10l5 5M5 10l-5 5" stroke="#808080" strokeWidth="2" />
        </Ico>
      </ToolButton>
      <ToolButton label="Стоп-заявка">
        <Ico crisp={false}>
          <g transform="translate(-3 -3)"><HandShape color="#a0a0a0" /></g>
          <g transform="translate(3 1)"><HandShape color="#a0a0a0" /></g>
        </Ico>
      </ToolButton>
      <ToolButton label="Запрет">
        <Ico crisp={false}>
          <HandShape color="#a0a0a0" />
          <circle cx="12" cy="12" r="3" stroke="#909090" fill="#fff" />
          <path d="M10 10l4 4" stroke="#909090" />
        </Ico>
      </ToolButton>
    </div>
    <div className="flex w-[164px] items-center border-r border-[#b0b0b0]">
      <Grip />
      <ToolButton label="Найти">
        <Ico crisp={false}>
          <circle cx="6.500" cy="6" r="5" fill="#a8f0f8" stroke="#607890" />
          <path d="M11 11l4 4" stroke="#b01010" strokeWidth="3" />
        </Ico>
      </ToolButton>
      <input aria-label="Поиск инструмента" className="ml-1 h-[23px] w-[74px] border border-[#e2e2e2] border-b-[#808080] bg-white px-1 text-[11px]" />
    </div>
    <div className="flex w-[66px] items-center border-r border-[#b0b0b0]">
      <Grip />
      <svg width="34" height="34" viewBox="0 0 34 34" shapeRendering="crispEdges" role="img" aria-label="Поезд">
        <path d="M0 0h34v34H0z" fill="#00ffff" />
        <path d="M0 25h34v9H0z" fill="#008000" />
        <path d="M1 15h20v10H1z" fill="#808000" stroke="#000" />
        <path d="M4 18h4v3H4zM10 18h4v3h-4zM16 18h3v3h-3z" fill="#ffff00" stroke="#000" />
        <path d="M24 15h3v-2h7v13H24z" fill="#b0e8f0" stroke="#404040" />
        <path d="M28 16h6M28 19h6M28 22h6" stroke="#ff00ff" />
        <path d="M3 12h4v2H3zM16 12h4v2h-4zM0 26h33v1H0zM5 28h3v2H5zM14 27h5v4h-5zM25 27h5v4h-5z" fill="#000" />
        <path d="M4 24h5v1H4z" fill="#00ffff" />
        <path d="M1 33h32" stroke="#ffff00" strokeDasharray="3 2" />
        <path d="M0 33V.5h33" fill="none" stroke="#606060" />
      </svg>
    </div>
    <div className="flex w-[511px] items-center border-r border-[#b0b0b0]">
      <Grip />
      <button className="h-[21px] w-[50px] border-b border-[#808080] bg-[#f0f0f0] text-[11px]">5 | 5</button>
      <span className="relative ml-px font-['Liberation_Sans',sans-serif]">
        <select
          aria-label="Сообщения"
          className="h-[21px] w-[442px] appearance-none rounded-xs border border-[#d0d0d0] bg-white pl-[22px] text-[11px] text-black"
        >
          <option>12:56:16&nbsp; (210) Снято заявок: 1. Снято количество: 100. Нельзя снимать: 0.</option>
        </select>
        <svg width="16" height="17" viewBox="0 0 16 17" fill="#fff" stroke="#303030" className="absolute top-0.5 left-0.5" aria-hidden="true">
          <circle cx="8" cy="7" r="6.500" strokeDasharray="3 1" />
          <path d="M6 13l2 3 2-3" />
          <path d="M8 2v2M8 6v5M6 11h4" stroke="#0000d0" strokeWidth="2" />
        </svg>
        <ChevronDown size={11} className="pointer-events-none absolute top-[5px] right-1 text-[#505050]" />
      </span>
    </div>
    <div className="flex flex-1 items-center">
      <Grip />
      <ToolButton label="Тип графика">
        <Ico>
          <path d="M1.500 0v14.500H16" stroke="#000" strokeWidth="2" />
          <path d="M4 7h3v6H4z" fill="#f00000" stroke="none" />
          <path d="M11 3h4v10h-4z" fill="#0000e0" stroke="none" />
          <path d="M5 3h5M7.500 1v6" />
        </Ico>
      </ToolButton>
      <span className="relative">
        <select aria-label="Интервал" className="h-[21px] w-12 appearance-none rounded-xs border border-[#c8c8c8] bg-white pl-0.5 text-[11px]">
          <option>H4</option>
        </select>
        <ChevronDown size={11} className="pointer-events-none absolute top-[6px] right-[3px] text-[#505050]" />
      </span>
      <ToolButton label="Курсор" active>
        <Ico><path d="M8.500 3v11M3 8.500h11" /></Ico>
      </ToolButton>
      <Caret active />
      <ToolButton label="Переместить">
        <Ico crisp={false} size={14}>
          <path d="M8 2v12M2 8h12" strokeWidth="1.500" />
          <path d="M8 0l3 4H5zM8 16l3-4H5zM0 8l4-3v6zM16 8l-4-3v6z" fill="#000" stroke="none" />
        </Ico>
      </ToolButton>
      <ToolButton label="Увеличить">
        <Ico crisp={false} size={12}><circle cx="8" cy="8" r="6.500" strokeWidth="1.500" /><path d="M4 8h8M8 4v8" strokeWidth="1.500" /></Ico>
      </ToolButton>
      <ToolButton label="Уменьшить">
        <Ico crisp={false} size={12}><circle cx="8" cy="8" r="6.500" strokeWidth="1.500" /><path d="M4 8h8" strokeWidth="1.500" /></Ico>
      </ToolButton>
      <ToolButton label="Линейка">
        <Ico crisp={false} size={15}><path d="M1 12L11 1l4 3L5 15zM8 4l2 2M6 7l2 2M4 9l2 2" /></Ico>
      </ToolButton>
      <ToolButton label="Выбор"><Ico crisp={false} size={15}><HandShape color="#404040" /></Ico></ToolButton>
      <ToolButton label="Рука" active><Hand size={16} strokeWidth={2} fill="#fff" /></ToolButton>
      <Sep />
      <ToolButton label="Линия"><Ico crisp={false} size={14}><path d="M1 15L15 1" strokeWidth="1.500" /></Ico></ToolButton>
      <Caret />
      <ToolButton label="Надпись"><span className="text-[11px]">Aa</span></ToolButton>
      <Caret />
      <ToolButton label="Фигура">
        <Ico crisp={false} size={14}><path d="M3 1l10 6-10 8z" fill="#404040" /><path d="M9 11l5-5v8z" fill="#808080" stroke="#606060" /></Ico>
      </ToolButton>
      <Caret />
      <ToolButton label="Скрыть">
        <Ico crisp={false} size={15}><path d="M1 8c2-5 5-5 7-4M7 12c4 1 7-1 8-5M1 8l3 4M12 4l3 3" strokeWidth="2" /><path d="M2 15L13 1" strokeWidth="2" stroke="#606060" /></Ico>
      </ToolButton>
      <ToolButton label="Слои">
        <Ico crisp={false} size={16}><path d="M0 8l6-6 3 1-6 8z" fill="#404040" stroke="none" /><path d="M3 11l7-8 3 1-6 8z" fill="#808080" stroke="none" /><path d="M7 14l6-9 3 1-6 10z" fill="#b0b0b0" stroke="none" /></Ico>
      </ToolButton>
      <Sep />
      <ToolButton label="Магнит">
        <Ico crisp={false}><path d="M3.500 14V7a4.500 4.500 0 0 1 4.500-4.500" stroke="#1c5fc0" strokeWidth="3" /><path d="M8 2.500A4.500 4.500 0 0 1 12.500 7v7" stroke="#e02828" strokeWidth="3" /><path d="M2 13.500h3M11 13.500h3" stroke="#c0c0c0" strokeWidth="2" /></Ico>
      </ToolButton>
      <Caret />
    </div>
  </div>
);

/* ---------- top of the page ---------- */

const QuikLogo = ({ size }: { size: number }) => (
  <svg width={size} height={size} viewBox="0 0 16 16" fill="none" aria-hidden="true">
    <circle cx="8" cy="7" r="5" stroke="#2f8a66" strokeWidth="3.500" />
    <path d="M7 10l5 0-1 6z" fill="#2f8a66" />
  </svg>
);

const TitleBar = () => (
  <header className="flex h-[23px] items-center bg-[#eff3f6] pr-[3px] pl-0.5">
    <QuikLogo size={17} />
    <h1 className="flex-1 pl-[5px] text-[11px] text-[#8b8b8b]">
      [Ялый Александр Ефимович UID: 35995] Информационно-торговая система QUIK (версия 12.2.2.8)
    </h1>
    <div className="flex">
      {["M1 5.500h9", "M1.500 3.500h6v7h-6zM3.500 3V1.500h6v7H8", "M1 .5l9 10M10 .5l-9 10"].map((d, i) => (
        <button key={d} aria-label={["Свернуть", "Развернуть", "Закрыть"][i]} className="flex h-[20px] w-[46px] items-center justify-center">
          <svg width="11" height="11" viewBox="0 0 11 11" fill="none" stroke="#8b8b8b" aria-hidden="true">
            <path d={d} />
          </svg>
        </button>
      ))}
    </div>
  </header>
);

const Menu = () => (
  <nav className="flex h-[18px] items-center gap-3.5 bg-white pt-0.5 pl-2 text-[11px] text-[#4a4a4a]">
    {["Система", "Создать окно", "Действия", "Брокер", "Сервисы", "Окна"].map((item) => (
      <a key={item} href="#">
        {item}
      </a>
    ))}
  </nav>
);

const Recorder = () => (
  <div className="absolute top-0 left-[710px] h-[25px] w-[500px]">
    <svg className="absolute inset-0" width="500" height="25" viewBox="0 0 500 25" aria-hidden="true">
      <path d="M0 0h500l-23 24.500H24z" fill="#232a32" stroke="#000" />
    </svg>
    <div className="relative flex h-[25px] items-center pl-[34px] text-[12px] text-white">
      <svg width="11" height="11" viewBox="0 0 11 11" stroke="#fff" aria-hidden="true">
        <path d="M0 .5h11M0 5.500h11M0 10.500h11" />
      </svg>
      <svg width="11" height="16" viewBox="0 0 11 16" fill="#4f8fe8" className="ml-[15px]" aria-hidden="true">
        <path d="M3 0h5v7h3v3H0V7h3zM4 11h3l-1.500 5z" />
      </svg>
      <span className="w-[147px] pl-[11px] text-[11px]">1920x1080</span>
      <span className="w-[118px]">Монитор 1</span>
      <span className="size-[13px] rounded-full bg-[#dc2626]" />
      <span className="w-[41px] pl-[5px]">REC</span>
      <button aria-label="Снимок" className="flex h-6 w-[23px] items-center justify-center bg-[#4a7cc8]">
        <svg width="15" height="12" viewBox="0 0 15 12" fill="#c8dcf8" aria-hidden="true">
          <path d="M0 2h4l1-2h5l1 2h4v10H0z" />
          <circle cx="7.500" cy="6.500" r="2.500" fill="none" stroke="#4a7cc8" strokeWidth="1.500" />
        </svg>
      </button>
      <span className="ml-0.5 h-3 w-px bg-[#666]" />
      <svg width="14" height="14" viewBox="0 0 14 14" fill="#e8e8e8" className="ml-1.5" aria-hidden="true">
        <path d="M0 14l1-4 7-7 3 3-7 7zM9 2l2-2 3 3-2 2z" />
      </svg>
      <span className="ml-[10px] h-3 w-px bg-[#666]" />
      <svg width="10" height="10" viewBox="0 0 10 10" stroke="#ddd" className="ml-2" aria-hidden="true">
        <path d="M0 0l10 10M10 0L0 10" />
      </svg>
    </div>
  </div>
);

/* ---------- bottom of the page ---------- */

const tabs: ITab[] = [
  { title: "ММВБ", width: "w-[46px]" },
  { title: "ПОРТФЕЛЬ", width: "w-[71px]" },
  { title: "НОВОСТИ/Окно сообщений", width: "w-[168px]" },
  { title: "ГАЗПРОМ", width: "w-[67px]" },
  { title: "ГП нефть", width: "w-[61px]" },
  { title: "АСТРА", width: "w-[47px]" },
  { title: "МВБ", width: "w-[46px]" },
  { title: "СЕЛИГДАР", width: "w-[70px]" },
  { title: "ОВК", width: "w-[46px]" },
  { title: "НОВОТЭК", width: "w-[64px]" },
  { title: "МЕЧЕЛ ОБ", width: "w-[68px]" },
  { title: "МЕЧЕЛ ПРФ", width: "w-[77px]" },
  { title: "СУРГУТ об", width: "w-[71px]" },
  { title: "СУРГУТ  ПРФ", width: "w-[80px]" },
  { title: "Евро Транс", width: "w-[70px]" },
  { title: "ВТБ", width: "w-[47px]" },
  { title: "СЕГЕЖА", width: "w-[54px]" },
  { title: "М видео", width: "w-[57px]" },
  { title: "РУСАЛ", width: "w-[47px]" },
  { title: "GOLD", width: "w-[46px]" },
  { title: "ЛЕН золото", width: "w-[74px]" },
  { title: "МОСБИРЖА", width: "w-[81px]" },
  { title: "Транс нефть", width: "w-[77px]" },
  { title: "Сбер прф", width: "w-[65px]" },
  { title: "ММК", width: "w-[46px]" },
  { title: "iАвиастКао", width: "w-[75px]" },
  { title: "ОГК-2", width: "w-[46px]" },
  { title: "РОС нефть", width: "w-[68px]" },
];

const Tabs = () => (
  <div role="tablist" className="flex h-[25px] items-stretch border-b border-[#d4d4d4] bg-[#f0f0f0] pl-0.5 text-[11px] text-black">
    {tabs.map(({ title, width }) => {
      const active = title === "СУРГУТ об";
      return (
        <button
          key={title}
          role="tab"
          aria-selected={active}
          className={`shrink-0 border-r border-[#dcdcdc] pl-[5px] text-left whitespace-pre ${width} ${
            active ? "bg-white" : "mt-0.5 border-t bg-[#f3f3f3] pt-1"
          }`}
        >
          {title}
        </button>
      );
    })}
  </div>
);

const StatusBar = () => (
  <div className="flex h-[23px] items-center bg-[#f0f0f0] text-[11px] text-black">
    <span className="flex-1 pl-0.5">Время сервера: 18:27:03; записей: 2836945; текущая: 9120501</span>
    <span className="flex h-5 w-[305px] items-center gap-1 border-l border-[#c8c8c8] pl-[3px]">
      <svg width="16" height="16" viewBox="0 0 16 16" shapeRendering="crispEdges" aria-hidden="true">
        <path d="M1 1h6v4H1zM1 8h6v4H1z" fill="#20d0d0" stroke="#303030" />
        <path d="M0 6h8v1H0zM0 14h8v1H0z" fill="#404040" />
        <path d="M8 7l4-2 3 3-2 3z" fill="#f0e040" stroke="#202020" />
        <path d="M14 11v4H8" fill="none" stroke="#1010e0" />
      </svg>
      91.209.122.181:15100
    </span>
    <span className="h-5 w-[88px] border-l border-[#c8c8c8]" />
    <span className="h-5 w-[25px] border-l border-[#c8c8c8]" />
    <span className="h-5 w-[25px] border-l border-[#c8c8c8]" />
    <span className="flex h-5 w-[126px] items-center gap-[7px] border-l border-[#c8c8c8] pl-[7px]">
      <span className="size-[10px] rounded-full bg-[#00e810]" />
      03.06.2025
    </span>
  </div>
);

const TaskIcon = ({ label, children, open }: { label: string; children: ReactNode; open?: boolean }) => (
  <button aria-label={label} className="relative flex h-[45px] w-11 items-center justify-center">
    {children}
    {open && <span className="absolute bottom-0 h-[3px] w-1.5 rounded-full bg-[#7c8594]" />}
  </button>
);

const Taskbar = () => (
  <footer className="flex h-[47px] items-center border-t border-[#bac4d0] bg-linear-to-r from-[#e2eff8] via-[#d5dcf6] to-[#e0edf8] pb-0.5">
    <button className="flex w-[660px] items-center gap-1 pl-[18px] text-left">
      <svg width="28" height="30" viewBox="0 0 28 30" aria-hidden="true">
        <path d="M11 4h4l9 24a1 1 0 0 1-1 1H2a1 1 0 0 1-1-1z" fill="#d2521c" />
        <path d="M12.500 11l7 6h-2v4h-10v-4h-2z" fill="#fff" />
        <path d="M4 23q2-2 4 0t4 0 4 0 4 0M4 26q2-2 4 0t4 0 4 0 4 0" fill="none" stroke="#fff" />
        <circle cx="19" cy="8" r="8" fill="#c42b1c" />
        <text x="16" y="12" fill="#fff" fontSize="11">1</text>
      </svg>
      <span className="text-[12px] leading-4">
        <span className="block text-[#1c1c1c]">Предупрежден...</span>
        <span className="block text-[#5c5f66]">В действии</span>
      </span>
    </button>
    <button aria-label="Пуск">
      <svg width="24" height="24" viewBox="0 0 24 24" aria-hidden="true">
        <defs>
          <linearGradient id="win" x1="0" y1="0" x2="1" y2="1">
            <stop offset="0" stopColor="#4cc8f8" />
            <stop offset="1" stopColor="#0078d4" />
          </linearGradient>
        </defs>
        <path d="M0 0h11.500v11.500H0zM12.500 0H24v11.500H12.500zM0 12.500h11.500V24H0zM12.500 12.500H24V24H12.500z" fill="url(#win)" />
      </svg>
    </button>
    <label className="ml-3.5 flex h-8 w-[218px] items-center rounded-full border border-[#c4cce0] bg-[#f3f6fd] pr-2 pl-2.5">
      <Search size={17} color="#202020" />
      <input placeholder="Поиск" aria-label="Поиск" className="ml-2 w-28 flex-1 bg-transparent text-[13px] placeholder:text-[#5c5f66]" />
      <svg width="40" height="30" viewBox="0 0 40 30" aria-hidden="true">
        <path d="M15 1q2 12 8 14-6 2-8 14-2-12-8-14 6-2 8-14z" fill="#f9b916" />
        <path d="M29 12q1 5 4 6-3 1-4 6-1-5-4-6 3-1 4-6z" fill="#f9c440" />
        <path d="M2 16q.5 3 3 4-2.500 1-3 4-.5-3-3-4 2.500-1 3-4z" fill="#1a86e0" />
        <circle cx="26" cy="4" r="1.500" fill="#e08060" />
        <circle cx="37" cy="23" r="1.500" fill="#80b848" />
      </svg>
    </label>
    <div className="ml-[3px] flex">
      <TaskIcon label="Представление задач">
        <svg width="24" height="24" viewBox="0 0 24 24" aria-hidden="true">
          <path d="M7 1h16v14H7z" fill="#f8f8f8" />
          <path d="M1 7h15v15H1z" fill="#2c2c2c" />
          <path d="M7 7h9v8H7z" fill="#b8b8b8" />
        </svg>
      </TaskIcon>
      <TaskIcon label="Часы">
        <svg width="24" height="24" viewBox="0 0 24 24" aria-hidden="true">
          <path d="M.5.5h23v23H.5z" fill="#dfeaf8" stroke="#8aa0b8" />
          <path d="M4 4h2v3M11 3h2M18 4h2v3M3 11v2M21 11v2M4 20h3v-2M11 21h2M18 20h2v-2M8 17h1M16 17h1" fill="none" stroke="#405878" />
          <path d="M12 5v8h5" fill="none" stroke="#203858" />
        </svg>
      </TaskIcon>
      <TaskIcon label="Параметры">
        <svg width="24" height="24" viewBox="0 0 24 24" aria-hidden="true">
          <circle cx="12" cy="12" r="9" fill="#6b7785" />
          <circle cx="12" cy="12" r="10" fill="none" stroke="#6b7785" strokeWidth="4" strokeDasharray="5.240 5.240" />
          <circle cx="12" cy="12" r="5" fill="#0a5cb0" stroke="#dde6f0" strokeWidth="1.500" />
        </svg>
      </TaskIcon>
      <TaskIcon label="Проводник">
        <svg width="26" height="24" viewBox="0 0 26 24" aria-hidden="true">
          <path d="M1 2h9l3 3h12v17H1z" fill="#e8a818" />
          <path d="M1 7h24v15H1z" fill="#ffd04a" />
          <path d="M6 22v-5a2 2 0 0 1 2-2h10a2 2 0 0 1 2 2v5z" fill="#1878c8" />
        </svg>
      </TaskIcon>
      <TaskIcon label="Edge">
        <svg width="24" height="24" viewBox="0 0 24 24" aria-hidden="true">
          <defs>
            <linearGradient id="edge" x1="0" y1="0" x2="1" y2="0">
              <stop offset="0" stopColor="#1b9de2" />
              <stop offset="1" stopColor="#5fd67a" />
            </linearGradient>
          </defs>
          <circle cx="12" cy="12" r="12" fill="#0f62b4" />
          <path d="M0 11C1 4 6 0 12 0c7 0 12 5 12 10 0 4-3 6-6 6-4 0-5-2-4-4 0-3-2-5-6-5-4 0-7 2-8 4z" fill="url(#edge)" />
          <path d="M13 12c-1 4 2 7 9 6-1 2-3 3-5 3-6 0-9-5-7-9 1-1 2-1 3 0z" fill="#d7e0f6" />
        </svg>
      </TaskIcon>
      <TaskIcon label="Chrome" open>
        <svg width="24" height="24" viewBox="0 0 24 24" aria-hidden="true">
          <circle cx="12" cy="12" r="12" fill="#34a853" />
          <path d="M12 12L1.600 6A12 12 0 0 1 22.400 6z" fill="#ea4335" />
          <path d="M12 6h10.400A12 12 0 0 1 12 24l5-9z" fill="#fbbc05" />
          <circle cx="12" cy="12" r="6" fill="#fff" />
          <circle cx="12" cy="12" r="4.500" fill="#4285f4" />
        </svg>
      </TaskIcon>
      <TaskIcon label="QUIK" open><QuikLogo size={27} /></TaskIcon>
      <TaskIcon label="Запись" open>
        <svg width="24" height="24" viewBox="0 0 24 24" aria-hidden="true">
          <circle cx="12" cy="12" r="11.500" fill="#111" stroke="#888" />
          <circle cx="12" cy="12" r="10" fill="none" stroke="#eee" />
          <circle cx="12" cy="12" r="6" fill="#e81010" />
        </svg>
      </TaskIcon>
    </div>
    <div className="ml-auto flex items-center text-[#1c1c1c]">
      <ChevronUp size={16} />
      <span className="ml-5 w-[40px] text-[11px]">РУС</span>
      <Wifi size={16} />
      <Volume2 size={16} className="ml-2" />
      <svg width="16" height="14" viewBox="0 0 16 14" fill="none" stroke="#1c1c1c" className="ml-2" aria-hidden="true">
        <path d="M3 3.500h10v9H2.500V8M14.500 6v4" strokeWidth="1.500" />
        <path d="M6 6h5v5H5V7z" fill="#1c1c1c" />
        <path d="M4 0v3M1 0v3M1 3h3v3" />
      </svg>
      <span className="ml-2 w-[66px] text-right text-[11px] leading-4">
        20:27
        <br />
        03.06.2025
      </span>
      <span className="relative mr-5 ml-2">
        <Bell size={16} strokeWidth={1.5} />
        <svg width="6" height="6" viewBox="0 0 6 6" fill="none" stroke="#1c1c1c" className="absolute -top-px -right-px bg-[#e0edf8]" aria-hidden="true">
          <path d="M1 1h4L1 5h4" />
        </svg>
      </span>
    </div>
  </footer>
);

const App = () => (
  <div className="relative flex min-h-screen flex-col bg-[#ababab] font-['Noto_Sans','Open_Sans',sans-serif]">
    <TitleBar />
    <Menu />
    <Toolbar />
    <main className="relative flex flex-1 items-start gap-[23px] pr-[11px] pl-[14px]">
      <MdiWindow title="Сургнфгз График цены и объёма - [4 часа]" icon={<ChartIcon />} className="mt-3 min-w-0 flex-1">
        <Chart />
        <div className="flex h-[13px] items-center justify-end pr-[17px]">
          <div className="h-px w-[52px] bg-[#858585]" />
        </div>
      </MdiWindow>
      <MdiWindow title="Сургнфгз [МБ ФР: T+: А..." icon={<BookIcon />} className="w-[286px] shrink-0">
        <OrderBook />
      </MdiWindow>
      <div className="absolute bottom-2 left-[15px] flex h-[52px] w-[198px] items-center justify-center border-2 border-black bg-black outline-2 -outline-offset-4 outline-[#c8c8bc]">
        <time className="bg-linear-to-b from-[#c8c8ff] via-[#8080c8] to-[#6060b0] bg-clip-text font-['DejaVu_Sans',sans-serif] text-[36px] font-bold leading-10 text-transparent">
          20:27:07
        </time>
      </div>
    </main>
    <Tabs />
    <StatusBar />
    <Taskbar />
    <Recorder />
  </div>
);

export default App;
